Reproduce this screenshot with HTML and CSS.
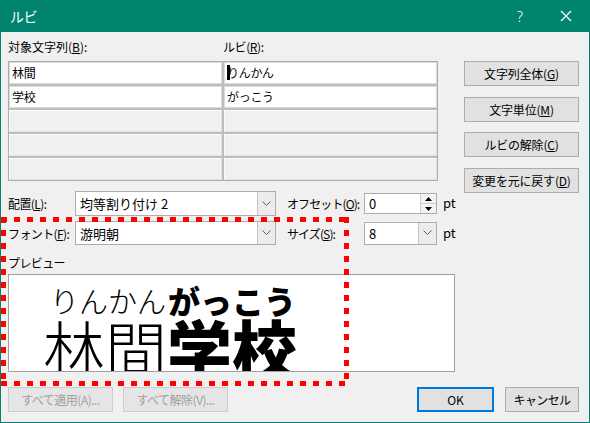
FILE: index.html
```html
<!DOCTYPE html>
<html lang="ja">
<head>
<meta charset="utf-8">
<title>ルビ</title>
<link rel="stylesheet" href="styles.css">
</head>
<body>
<div class="win">
  <div class="titlebar">
    <span class="title">ルビ</span>
    <span class="help">?</span>
    <span class="close"><svg width="12" height="12" viewBox="0 0 12 12"><path d="M1 1L11 11M11 1L1 11" stroke="#fff" stroke-width="1.3" fill="none"/></svg></span>
  </div>
  <div class="body">
    <div class="top">
      <div class="left">
        <div class="labels">
          <span class="lab1">対象文字列(<u>B</u>):</span>
          <span class="kana">ルビ(<u>R</u>):</span>
        </div>
        <div class="grid">
          <div class="cell">林間</div>
          <div class="cell caretcell"><span class="caret"></span>りんかん</div>
          <div class="cell">学校</div>
          <div class="cell">がっこう</div>
          <div class="cell empty"></div>
          <div class="cell empty"></div>
          <div class="cell empty"></div>
          <div class="cell empty"></div>
          <div class="cell empty"></div>
          <div class="cell empty"></div>
        </div>
      </div>
      <div class="btns">
        <div class="btn">文字列全体(<u>G</u>)</div>
        <div class="btn">文字単位(<u>M</u>)</div>
        <div class="btn">ルビの解除(<u>C</u>)</div>
        <div class="btn">変更を元に戻す(<u>D</u>)</div>
      </div>
    </div>

    <div class="opts">
      <span class="olab">配置(<u>L</u>):</span>
      <div class="combo wide"><span class="val">均等割り付け 2</span><span class="arrow"><svg width="9" height="6" viewBox="0 0 9 6"><polyline points="0.5,0.5 4.5,4.5 8.5,0.5" fill="none" stroke="#606060" stroke-width="1"/></svg></span></div>
      <span class="olab r">オフセット(<u>O</u>):</span>
      <div class="spin"><span class="val">0</span><span class="spinbtns"><span class="sb"><svg width="7" height="4" viewBox="0 0 7 4"><polygon points="3.5,0 7,4 0,4" fill="#000"/></svg></span><span class="sb"><svg width="7" height="4" viewBox="0 0 7 4"><polygon points="0,0 7,0 3.5,4" fill="#000"/></svg></span></span></div>
      <span class="pt">pt</span>

      <span class="olab">フォント(<u>F</u>):</span>
      <div class="combo wide f"><span class="val">游明朝</span><span class="arrow"><svg width="9" height="6" viewBox="0 0 9 6"><polyline points="0.5,0.5 4.5,4.5 8.5,0.5" fill="none" stroke="#606060" stroke-width="1"/></svg></span></div>
      <span class="olab r">サイズ(<u>S</u>):</span>
      <div class="combo small"><span class="val">8</span><span class="arrow"><svg width="9" height="6" viewBox="0 0 9 6"><polyline points="0.5,0.5 4.5,4.5 8.5,0.5" fill="none" stroke="#606060" stroke-width="1"/></svg></span></div>
      <span class="pt">pt</span>
    </div>

    <div class="plabel">プレビュー</div>
    <div class="preview">
      <div class="word thin">
        <span class="rb">りんかん</span>
        <span class="base">林間</span>
      </div>
      <div class="word bold">
        <span class="rb">がっこう</span>
        <span class="base">学校</span>
      </div>
    </div>

    <div class="bottom">
      <div class="group">
        <div class="dbtn">すべて適用(A)...</div>
        <div class="dbtn">すべて解除(V)...</div>
      </div>
      <div class="group g2">
        <div class="btn ok">OK</div>
        <div class="btn cancel">キャンセル</div>
      </div>
    </div>
  </div>
  <div class="redbox"></div>
</div>
</body>
</html>
```

FILE: styles.css
```css
* { box-sizing: border-box; }
html, body { margin: 0; padding: 0; }
body {
  width: 590px;
  height: 423px;
  overflow: hidden;
  font-family: "Noto Sans CJK JP", "Noto Sans", sans-serif;
  font-size: 12px;
  color: #000;
  background: #fff;
}
u { text-decoration: underline; text-underline-offset: 1px; }

.win {
  position: relative;
  width: 590px;
  height: 423px;
  border: 1px solid #00846f;
  border-top: 0;
  background: #f0f0f0;
  display: flex;
  flex-direction: column;
}
.titlebar {
  height: 32px;
  flex: none;
  background: #00846f;
  color: #fff;
  display: flex;
  align-items: center;
  padding-left: 9px;
  font-size: 14px;
}
.title { flex: 1; letter-spacing: -0.5px; }
.help {
  width: 46px;
  text-align: center;
  font-family: "Noto Sans", sans-serif;
  font-size: 14px;
  font-weight: 300;
}
.close {
  width: 46px;
  display: flex;
  justify-content: center;
  align-items: center;
}

.body {
  flex: 1;
  display: flex;
  flex-direction: column;
  padding: 0 10px 0 7px;
}
.top {
  display: flex;
  align-items: flex-start;
  height: 149px;
}
.left { width: 430px; }
.labels {
  height: 29px;
  display: flex;
  align-items: center;
  padding-bottom: 1px;
}
.lab1 { width: 215px; }
.kana { letter-spacing: -0.4px; }
.grid {
  display: grid;
  grid-template-columns: 213px 213px;
  grid-auto-rows: 22px;
  gap: 2px;
  border: 1px solid #adadad;
  background: #bdbdbd;
}
.cell {
  position: relative;
  background: #fff;
  border: 1px solid #dadada;
  padding-left: 2px;
  line-height: 19px;
  letter-spacing: -0.3px;
}
.cell.empty {
  background: #f0f0f0;
  border-color: #fcfcfc #e2e2e2 #e2e2e2 #fcfcfc;
}
.caret {
  position: absolute;
  left: 2px;
  top: 2px;
  width: 3px;
  height: 15px;
  background: #000;
}

.btns {
  margin-left: 26px;
  padding-top: 29px;
  width: 117px;
  display: flex;
  flex-direction: column;
  gap: 10.5px;
}
.btn {
  height: 25px;
  background: #e1e1e1;
  border: 1px solid #adadad;
  display: flex;
  align-items: center;
  justify-content: center;
  letter-spacing: -0.2px;
}

.opts {
  margin-top: 10px;
  display: grid;
  grid-template-columns: 67px 212px 77px 79px auto;
  grid-template-rows: 25px 24px;
  row-gap: 5px;
  align-items: center;
}
.olab { white-space: nowrap; letter-spacing: -0.6px; }
.olab.r { letter-spacing: -0.9px; }
.combo {
  display: flex;
  border: 1px solid #adadad;
  background: #fff;
}
.combo.wide { width: 201px; height: 25px; }
.combo.wide.f { height: 24px; }
.combo.small { width: 73px; height: 23px; }
.combo .val {
  flex: 1;
  padding-left: 4px;
  display: flex;
  align-items: center;
  font-size: 13px;
}
.combo .arrow {
  width: 18px;
  border-left: 1px solid #c4c4c4;
  background: #ececec;
  display: flex;
  align-items: center;
  justify-content: center;
}
.spin {
  width: 73px;
  height: 21px;
  border: 1px solid #adadad;
  background: #fff;
  display: flex;
}
.spin .val {
  flex: 1;
  padding-left: 4px;
  display: flex;
  align-items: center;
  font-size: 13px;
}
.spinbtns {
  width: 16px;
  display: flex;
  flex-direction: column;
  border-left: 1px solid #d0d0d0;
}
.sb {
  flex: 1;
  display: flex;
  align-items: center;
  justify-content: center;
  background: #f3f3f3;
}
.sb + .sb { border-top: 1px solid #d0d0d0; }
.pt { font-size: 13px; padding-bottom: 2px; }

.plabel {
  margin-top: 10px;
  height: 16px;
  line-height: 16px;
  letter-spacing: -0.6px;
}
.preview {
  margin-top: 3px;
  width: 447px;
  height: 98px;
  border: 1px solid #a0a0a0;
  background: #fff;
  overflow: hidden;
  padding: 10px 0 0 34px;
  display: flex;
  align-items: flex-start;
}
.word {
  display: flex;
  flex-direction: column;
  align-items: center;
}
.word .rb { height: 31px; line-height: 31px; white-space: nowrap; }
.word .base { line-height: 62px; height: 62px; white-space: nowrap; }
.thin { font-weight: 300; }
.thin .rb { font-size: 29px; padding-left: 6px; }
.thin .base { font-size: 62px; }
.bold { font-weight: 900; }
.bold .rb { font-size: 32px; }
.bold .base { font-size: 65px; }

.bottom {
  margin-top: 15px;
  display: flex;
  justify-content: space-between;
}
.group { display: flex; gap: 10px; }
.g2 { gap: 11px; }
.dbtn {
  width: 105px;
  height: 25px;
  background: #e5e5e5;
  border: 1px solid #cccccc;
  color: #a0a0a0;
  display: flex;
  align-items: center;
  justify-content: center;
  letter-spacing: -0.5px;
  white-space: nowrap;
}
.btn.ok {
  width: 77px;
  border: 2px solid #0078d7;
}
.btn.cancel { width: 74px; letter-spacing: -0.6px; }

.redbox {
  position: absolute;
  left: 0;
  top: 217px;
  width: 348px;
  height: 169px;
  pointer-events: none;
  background:
    repeating-linear-gradient(to right, #f00 0 6px, transparent 6px 13px) left top / 100% 5px no-repeat,
    repeating-linear-gradient(to right, #f00 0 6px, transparent 6px 13px) left bottom / 100% 5px no-repeat,
    repeating-linear-gradient(to bottom, #f00 0 6px, transparent 6px 13px) left top / 5px 100% no-repeat,
    repeating-linear-gradient(to bottom, #f00 0 6px, transparent 6px 13px) right top / 5px 100% no-repeat;
}
```
